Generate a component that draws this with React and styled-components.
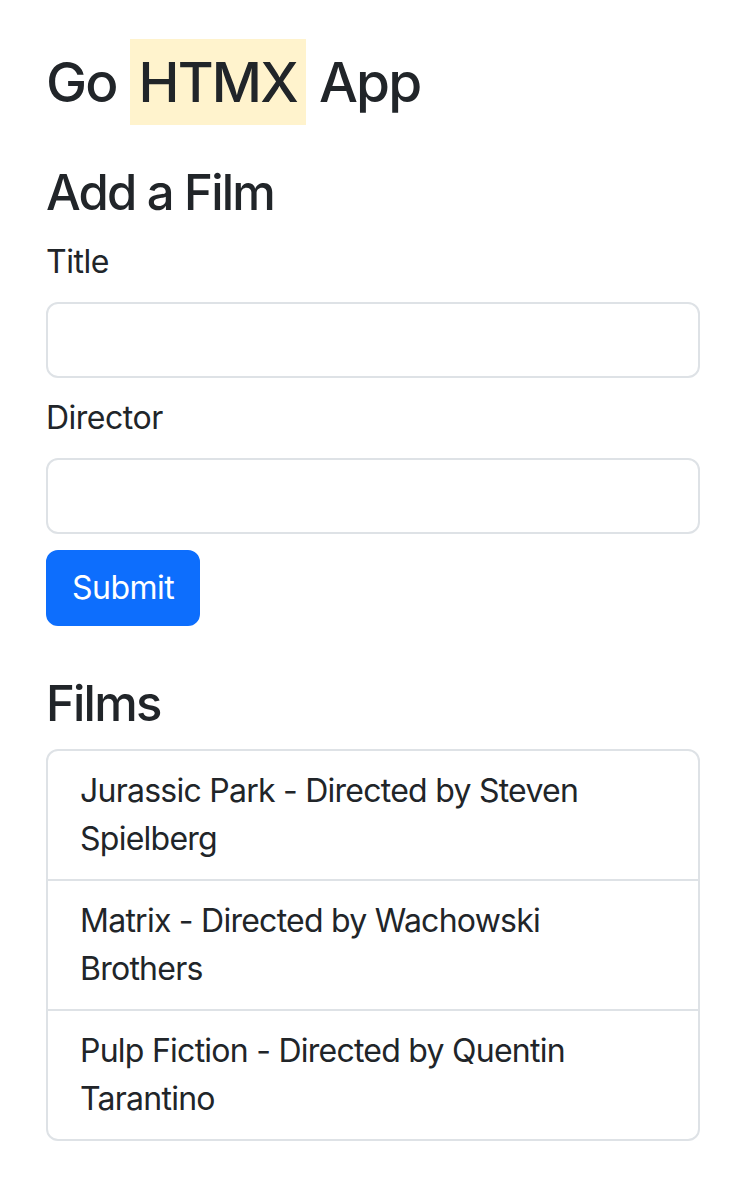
import React from "react";
import styled, { createGlobalStyle } from "styled-components";

const Global = createGlobalStyle`
  * { box-sizing: border-box; }
  html, body { margin: 0; padding: 0; background: #fff; }
  body {
    font-family: Inter, "Noto Sans", "Liberation Sans", sans-serif;
    color: #212529;
    font-size: 32px;
    line-height: 48px;
  }
`;

const Container = styled.div`
  padding: 49px 44px 40px 46px;
`;

const Title = styled.h1`
  margin: 0;
  font-size: 55px;
  line-height: 66px;
  font-weight: 500;
  letter-spacing: -1.8px;
`;

const Mark = styled.mark`
  background: #fff3cd;
  color: inherit;
  padding: 10px 9px;
`;

const Heading = styled.h2`
  margin: ${(p) => p.$top}px 0 16px;
  font-size: 49px;
  line-height: 59px;
  font-weight: 500;
  letter-spacing: -1.8px;
`;

const Form = styled.form`
  display: flex;
  flex-direction: column;
  align-items: flex-start;
`;

const Field = styled.div`
  display: flex;
  flex-direction: column;
  width: 100%;
  margin-bottom: 16px;
`;

const Label = styled.label`
  margin-bottom: 16px;
  font-size: 32px;
  line-height: 48px;
  letter-spacing: -0.5px;
`;

const Input = styled.input`
  width: 100%;
  height: 76px;
  border: 2px solid #dee2e6;
  border-radius: 12px;
  padding: 12px 24px;
  font: inherit;
  background: #fff;
  outline: none;
`;

const Button = styled.button`
  height: 76px;
  padding: 12px 24px;
  border: 2px solid #0d6efd;
  border-radius: 12px;
  background: #0d6efd;
  color: #fff;
  font: inherit;
  font-size: 32px;
  line-height: 48px;
  letter-spacing: -0.5px;
  cursor: pointer;
`;

const List = styled.ul`
  list-style: none;
  margin: 0;
  padding: 0;
  border: 2px solid #dee2e6;
  border-radius: 12px;
  overflow: hidden;
`;

const Item = styled.li`
  padding: 16px 32px;
  font-size: 32px;
  line-height: 48px;
  letter-spacing: -0.75px;
  & + & {
    border-top: 2px solid #dee2e6;
  }
`;

const films = [
  { title: "Jurassic Park", director: "Steven Spielberg" },
  { title: "Matrix", director: "Wachowski Brothers" },
  { title: "Pulp Fiction", director: "Quentin Tarantino" },
];

export default function App() {
  return (
    <>
      <Global />
      <Container>
        <Title>
          Go <Mark>HTMX</Mark> App
        </Title>
        <Heading $top={48}>Add a Film</Heading>
        <Form onSubmit={(e) => e.preventDefault()}>
          <Field>
            <Label htmlFor="title">Title</Label>
            <Input id="title" name="title" type="text" />
          </Field>
          <Field>
            <Label htmlFor="director">Director</Label>
            <Input id="director" name="director" type="text" />
          </Field>
          <Button type="submit">Submit</Button>
        </Form>
        <Heading $top={48}>Films</Heading>
        <List>
          {films.map((f) => (
            <Item key={f.title}>
              {f.title} - Directed by {f.director}
            </Item>
          ))}
        </List>
      </Container>
    </>
  );
}
